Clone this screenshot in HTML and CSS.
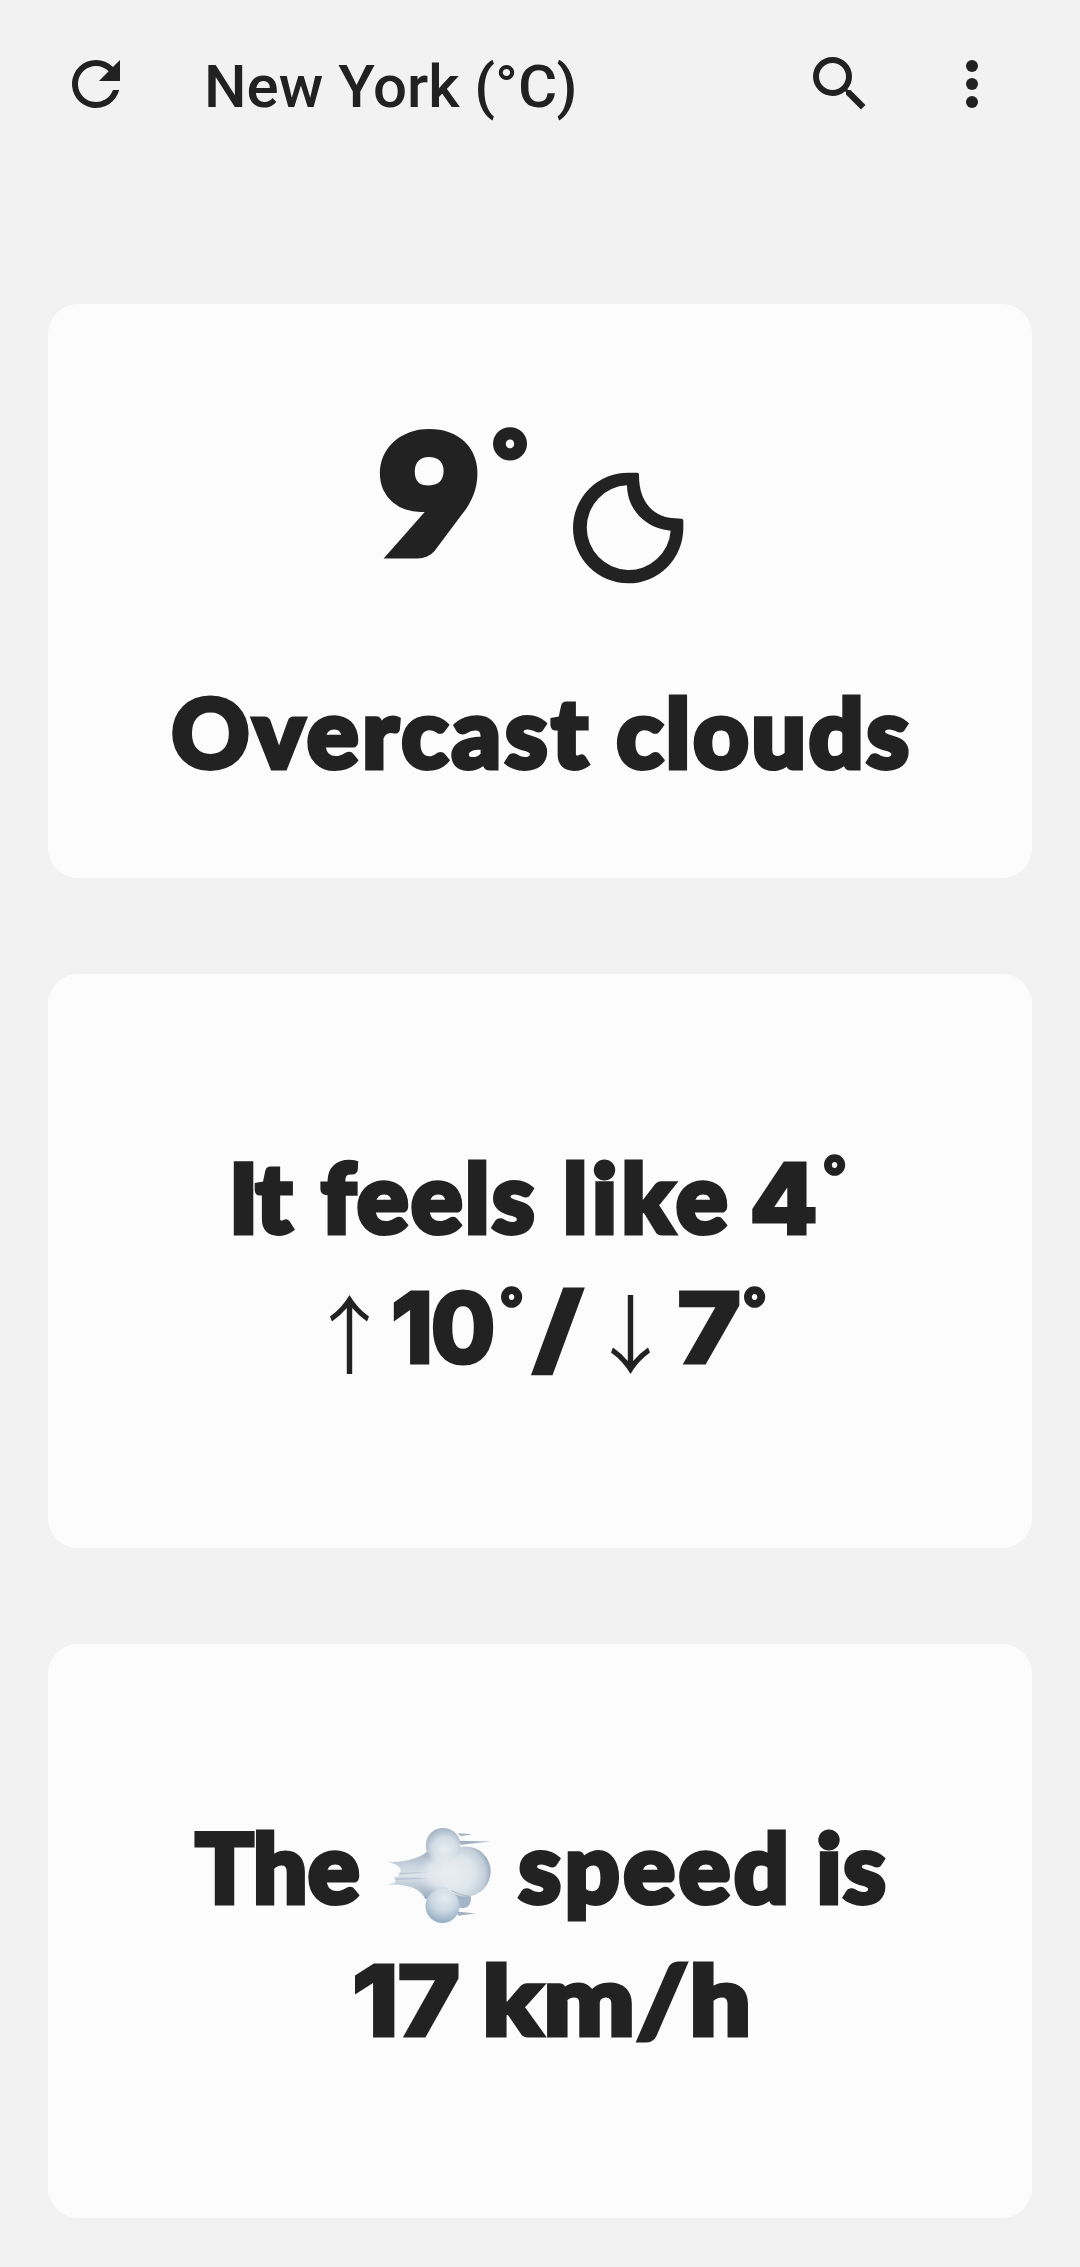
FILE: index.html
```
<!DOCTYPE html>
<html lang="en">
<head>
<meta charset="utf-8">
<title>Weather</title>
<link rel="stylesheet" href="styles.css">
</head>
<body>
<header class="bar">
  <svg class="icon" viewBox="0 0 24 24"><path d="M17.65 6.35A7.96 7.96 0 0 0 12 4a8 8 0 1 0 7.73 10h-2.08A6 6 0 1 1 12 6c1.66 0 3.14.69 4.22 1.78L13 11h7V4z"/></svg>
  <h1 class="title">New York (°C)</h1>
  <svg class="icon search" viewBox="0 0 24 24"><path d="M15.5 14h-.79l-.28-.27A6.47 6.47 0 0 0 16 9.5 6.5 6.5 0 1 0 9.5 16c1.61 0 3.09-.59 4.23-1.57l.27.28v.79l5 4.99L20.49 19zm-6 0a4.5 4.5 0 1 1 0-9 4.5 4.5 0 0 1 0 9z"/></svg>
  <svg class="icon more" viewBox="0 0 24 24"><circle cx="12" cy="6" r="2"/><circle cx="12" cy="12" r="2"/><circle cx="12" cy="18" r="2"/></svg>
</header>
<main class="cards">
  <section class="card now">
    <div class="temp">
      <span class="nine">9</span><span class="deg-big">°</span>
      <svg class="moon" viewBox="699 218 333 334"><path fill-rule="evenodd" d="M865 219H892Q897 219 897 225C896 308 941 354 1006 356L1024 357Q1030 357 1030 363V385A165.500 166 0 1 1 865 219ZM861 257A126 127 0 1 0 992 393C916 386 862 330 861 257Z"/></svg>
    </div>
    <div class="line"><span class="w overcast">Overcast</span><span class="w clouds">clouds</span></div>
  </section>
  <section class="card">
    <div class="line"><span class="w it">It</span><span class="w feels">feels</span><span class="w like">like</span><span class="w num four">4</span><span class="deg d4">°</span></div>
    <div class="line range">
      <svg class="arrow" viewBox="0 0 39 79"><path d="M16.800 79V13Q10 21 2 26.500L0 21.500Q12 13 19.500 0Q27 13 39 21.500L37 26.500Q29 21 22.200 13V79Z"/></svg>
      <span class="w num ten">10</span><span class="deg d10">°</span><span class="w num slash">/</span>
      <svg class="arrow down" viewBox="0 0 39 79"><path d="M16.800 0V66Q10 58 2 52.500L0 57.500Q12 66 19.500 79Q27 66 39 57.500L37 52.500Q29 58 22.200 66V0Z"/></svg>
      <span class="w num seven">7</span><span class="deg d7">°</span>
    </div>
  </section>
  <section class="card">
    <div class="line">
      <span class="w the">The</span>
      <svg class="wind" viewBox="51 50 311 290">
        <defs>
          <radialGradient id="main" gradientUnits="userSpaceOnUse" cx="262" cy="190" r="102"><stop offset="0" stop-color="#edf1f4"/><stop offset=".5" stop-color="#dde5eb"/><stop offset=".82" stop-color="#c2ced9"/><stop offset="1" stop-color="#92a5b8"/></radialGradient>
          <radialGradient id="top" cx=".55" cy=".62" r=".65"><stop offset="0" stop-color="#e8edf2"/><stop offset=".55" stop-color="#d3dde6"/><stop offset="1" stop-color="#9dafc0"/></radialGradient>
          <radialGradient id="low" cx=".55" cy=".28" r=".72"><stop offset="0" stop-color="#e5ebf0"/><stop offset=".5" stop-color="#cdd9e3"/><stop offset="1" stop-color="#94adc3"/></radialGradient>
          <linearGradient id="tail" x1="0" y1="0" x2="0" y2="1"><stop offset="0" stop-color="#91a3b6"/><stop offset=".35" stop-color="#c6d1dc"/><stop offset=".55" stop-color="#dce4eb"/><stop offset="1" stop-color="#94a8bc"/></linearGradient>
          <radialGradient id="glow"><stop offset="0" stop-color="#e7edf1"/><stop offset=".6" stop-color="#e3e9ee" stop-opacity=".85"/><stop offset="1" stop-color="#dfe6ec" stop-opacity="0"/></radialGradient>
        </defs>
        <path fill="#a3b1c1" d="M262 69L306 72L272 78ZM268 91L360 93L272 103ZM260 303L316 309L264 315Z"/>
        <path fill="#a3b5c6" d="M250 245L302 257Q304 292 278 292L255 290Z"/>
        <path fill="url(#tail)" d="M53 154C110 157 160 139 175 118L225 105L240 270L165 265C155 240 123 219 52 222L76 216Q78 207 70 202Q94 196 92 177Q87 162 53 154Z"/>
        <path fill="#8fa1b5" opacity=".35" d="M76 203Q120 198 178 204Q120 207 76 209ZM84 187L190 184L88 193Z"/>
        <circle cx="286" cy="183" r="75" fill="url(#main)"/>
        <circle cx="219" cy="105" r="52" fill="url(#top)"/>
        <circle cx="217" cy="286" r="51" fill="url(#low)"/>
        <ellipse cx="226" cy="188" rx="80" ry="66" fill="url(#glow)"/>
        <path d="M244 240Q269 255 296 257" fill="none" stroke="#9eafc0" stroke-width="2.500"/>
      </svg>
      <span class="w speed">speed</span><span class="w is">is</span>
    </div>
    <div class="line last"><span class="w num seventeen">17</span><span class="w kmh">km/h</span></div>
  </section>
</main>
</body>
</html>
```
FILE: styles.css
```
* { box-sizing: border-box; }
body { margin: 0; background: #f2f2f2; color: #222; font-family: Lato, "Liberation Sans", sans-serif; }

.bar { display: flex; align-items: center; height: 168px; padding: 0 72px 0 60px; }
.icon { width: 72px; height: 72px; fill: #212121; flex: none; }
.title { margin: 6px 0 0 72px; font: 500 60px/72px Roboto, sans-serif; color: #212121; white-space: nowrap; }
.search { margin-left: auto; }
.more { margin-left: 60px; }

.cards { display: flex; flex-direction: column; gap: 96px; padding: 136px 48px 49px; }
.card { display: flex; flex-direction: column; justify-content: center; height: 574px; padding-top: 2px; border-radius: 30px; background: #fcfcfc; }
.now { justify-content: flex-start; padding-top: 58px; gap: 43px; }

.line { display: flex; justify-content: center; align-items: baseline; height: 132px; }
.w, .deg, .nine, .deg-big { flex: none; white-space: nowrap; font-weight: 900; -webkit-text-stroke: 5px #222; }
.w { font-size: 96px; line-height: 132px; }
.num { font-family: Inter, sans-serif; font-size: 95px; font-weight: 700; }
.deg { width: 22px; align-self: flex-start; font-size: 51px; line-height: 89px; font-weight: 700; -webkit-text-stroke-width: 3.500px; }

.temp { display: flex; justify-content: center; align-items: flex-start; height: 260px; padding-right: 15px; }
.nine { width: 97px; font-size: 162px; line-height: 260px; text-indent: -2px; -webkit-text-stroke-width: 10px; transform: scaleX(1.08); transform-origin: left; }
.deg-big { width: 36px; margin-left: 15px; font-size: 82px; line-height: 192px; -webkit-text-stroke-width: 5px; }
.moon { width: 111px; height: 112px; margin: 110px 0 0 44px; fill: #222; }

.overcast { width: 419px; letter-spacing: 4px; }
.clouds { width: 292px; margin-left: 26px; letter-spacing: 2.900px; }

.it { width: 61px; letter-spacing: -1px; text-indent: -5px; }
.feels { width: 214px; margin-left: 26px; letter-spacing: 2.500px; }
.like { width: 163px; margin-left: 31px; letter-spacing: 4.600px; text-indent: -3px; }
.four { width: 64px; margin-left: 23px; text-indent: -2px; transform: scaleX(1.05); transform-origin: left; }
.d4 { margin-left: 8px; }

.range { padding-left: 16px; }
.arrow { align-self: flex-start; width: 39px; height: 79px; margin-top: 33px; fill: #222; }
.ten { width: 100px; margin-left: 24px; letter-spacing: -2px; text-indent: -1px; }
.d10 { margin-left: 8px; }
.slash { width: 53px; margin-left: 9px; font-weight: 600; text-indent: 1px; transform: scaleX(1.37); transform-origin: left; }
.down { margin-left: 26px; }
.seven { width: 62px; margin-left: 28px; transform: scaleX(1.13); transform-origin: left; }
.d7 { margin-left: 4px; }

.the { width: 166px; letter-spacing: .5px; text-indent: 1px; }
.wind { align-self: flex-start; width: 104px; height: 97px; margin: 27px 0 0 26px; }
.speed { width: 268px; margin-left: 28px; letter-spacing: 3.800px; }
.is { width: 68px; margin-left: 31px; letter-spacing: 1.700px; text-indent: -1px; }

.last { padding-left: 23px; }
.seventeen { width: 106px; text-indent: -1px; transform: scaleX(1.11); transform-origin: left; }
.kmh { width: 263px; margin-left: 26px; letter-spacing: 2px; text-indent: -3px; transform: scaleX(1.122); transform-origin: left; }
```
